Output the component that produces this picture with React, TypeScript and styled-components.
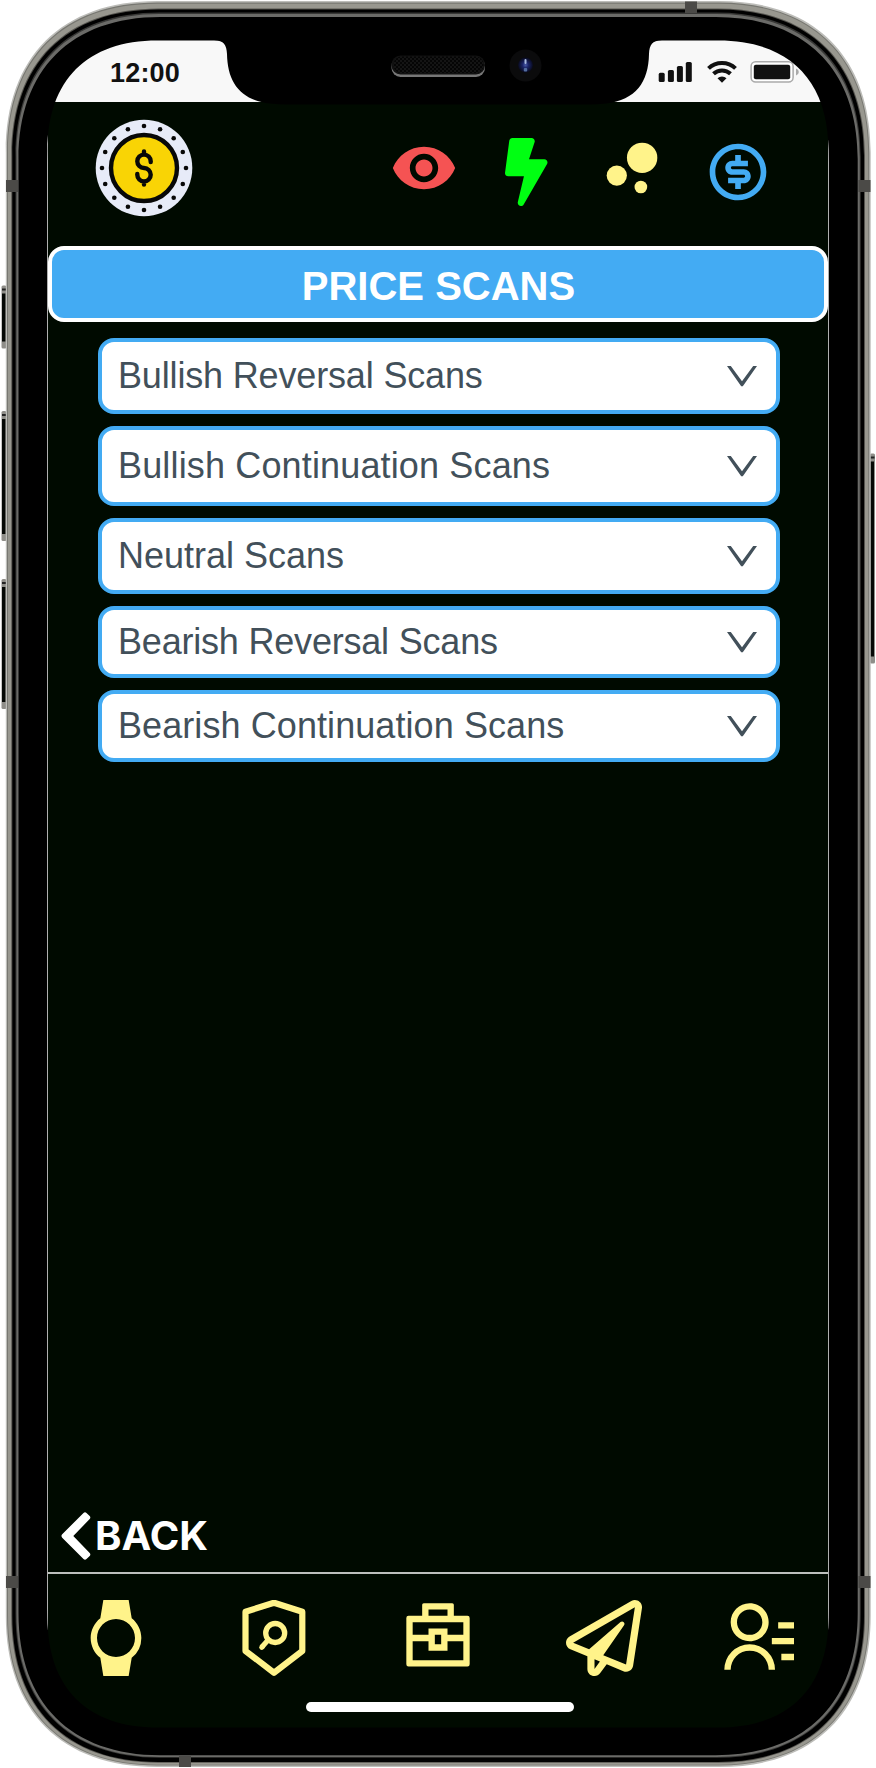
import React from "react";
import styled, { createGlobalStyle } from "styled-components";
import { MdBubbleChart, MdRemoveRedEye, MdWatch } from "react-icons/md";
import { FaBolt, FaRegPaperPlane } from "react-icons/fa";
import { RiMoneyDollarCircleLine } from "react-icons/ri";

const GlobalStyle = createGlobalStyle`
  * { box-sizing: border-box; }
  body { margin: 0; background: #fff; }
`;

const color = {
  screen: "#000a00",
  blue: "#43abf3",
  yellow: "#fff38a",
  text: "#42505a",
};

const Device = styled.div`
  position: relative;
  width: 876px;
  height: 1768px;
  padding: 40px 48px;
  overflow: hidden;
  font-family: "Liberation Sans", Arial, sans-serif;
`;

const FrameLayer = styled.svg`
  position: absolute;
  inset: 0;
  pointer-events: none;
`;

const Screen = styled.div`
  display: flex;
  flex-direction: column;
  height: 1688px;
  background: ${color.screen};
`;

const StatusBar = styled.div`
  display: flex;
  justify-content: space-between;
  height: 62px;
  padding: 0 28px 0 62px;
  background: #f8f8f8;
`;

const Clock = styled.time`
  margin-top: 18px;
  color: #111;
  font-size: 27px;
  font-weight: 700;
  line-height: 30px;
  letter-spacing: 0.2px;
`;

const StatusIcons = styled.svg`
  display: block;
  margin-top: 18px;
`;

const Header = styled.header`
  display: flex;
  align-items: flex-start;
  height: 144px;
  padding: 17px 56px 0 47px;
`;

const HeaderIcon = styled.span<{ $tint: string; $left: number; $top: number }>`
  display: flex;
  flex: none;
  margin: ${(p) => p.$top}px 0 0 ${(p) => p.$left}px;
  color: ${(p) => p.$tint};
  svg { display: block; }
`;

const BoltIcon = styled(FaBolt)`
  width: 42.5px;
  height: 68px;
`;

const Title = styled.h1`
  display: flex;
  align-items: center;
  justify-content: center;
  height: 76px;
  margin: 0;
  padding: 3px 0 0 1px;
  border: 4px solid #fff;
  border-radius: 16px;
  background: ${color.blue};
  color: #fff;
  font-size: 40px;
  font-weight: 700;
  line-height: 46px;
`;

const ScanList = styled.div`
  display: flex;
  flex: 1;
  flex-direction: column;
  gap: 12px;
  padding: 16px 48px 0 50px;
`;

const ScanSelect = styled.button<{ $height: number; $tracking: number }>`
  display: flex;
  align-items: center;
  justify-content: space-between;
  height: ${(p) => p.$height}px;
  padding: 0 19px 0 16px;
  border: 4px solid ${color.blue};
  border-radius: 16px;
  background: #fff;
  color: ${color.text};
  font: 36px/42px "Liberation Sans", Arial, sans-serif;
  letter-spacing: ${(p) => p.$tracking}px;
  text-align: left;
`;

const BackLink = styled.a`
  display: flex;
  align-items: center;
  height: 72px;
  padding-left: 13px;
  gap: 4px;
  color: #fff;
  font: 700 40px/48px Inter, sans-serif;
`;

const NavBar = styled.nav`
  display: grid;
  grid-template-columns: 158px 164px 166px 152px 76px;
  height: 130px;
  padding: 26px 0 0 30px;
  border-top: 2px solid #bdc0bd;
  color: ${color.yellow};
  svg { display: block; }
`;

const HomeIndicator = styled.div`
  width: 268px;
  height: 10px;
  margin: 0 auto 16px 258px;
  border-radius: 5px;
  background: #fff;
`;

const scans = [
  { label: "Bullish Reversal Scans", height: 76, tracking: -0.16 },
  { label: "Bullish Continuation Scans", height: 80, tracking: 0.15 },
  { label: "Neutral Scans", height: 76, tracking: 0 },
  { label: "Bearish Reversal Scans", height: 72, tracking: -0.2 },
  { label: "Bearish Continuation Scans", height: 72, tracking: 0.08 },
];

/* Closed outline with continuous-curvature corners. */
function squircle(x0: number, y0: number, x1: number, y1: number, r: number, k = 0.37) {
  const c = r * k;
  return [
    `M${x0} ${y0 + r}`,
    `C${x0} ${y0 + c} ${x0 + c} ${y0} ${x0 + r} ${y0}H${x1 - r}`,
    `C${x1 - c} ${y0} ${x1} ${y0 + c} ${x1} ${y0 + r}V${y1 - r}`,
    `C${x1} ${y1 - c} ${x1 - c} ${y1} ${x1 - r} ${y1}H${x0 + r}`,
    `C${x0 + c} ${y1} ${x0} ${y1 - c} ${x0} ${y1 - r}Z`,
  ].join("");
}

const SCREEN_EDGE = squircle(47.5, 40.5, 828.5, 1727.5, 110, 0.36);
const RIM_INNER = squircle(26, 25, 850, 1746, 136);

function SideButton({ x, y, height }: { x: number; y: number; height: number }) {
  return (
    <g>
      <rect x={x} y={y} width="5" height={height} rx="1.5" fill="#8f8e89" />
      <rect x={x + 0.5} y={y + 3} width="4" height="2" fill="#222" />
      <rect x={x + 0.5} y={y + 8} width="3.5" height={height - 15} fill="#050805" />
    </g>
  );
}

function Frame() {
  return (
    <FrameLayer width="876" height="1768" viewBox="0 0 876 1768">
      <defs>
        <pattern id="mesh" width="4" height="4" patternUnits="userSpaceOnUse">
          <rect width="4" height="4" fill="#050505" />
          <circle cx="1" cy="1" r="0.8" fill="#262626" />
          <circle cx="3" cy="3" r="0.8" fill="#262626" />
        </pattern>
        <radialGradient id="lens">
          <stop offset="0" stopColor="#4a5aa8" />
          <stop offset="0.4" stopColor="#1b2468" />
          <stop offset="1" stopColor="#080a1c" />
        </radialGradient>
        <linearGradient id="edge" x1="0" y1="140" x2="0" y2="1630" gradientUnits="userSpaceOnUse">
          <stop offset="0" stopColor="#b0b0b0" stopOpacity="0" />
          <stop offset="0.015" stopColor="#b0b0b0" />
          <stop offset="0.985" stopColor="#b0b0b0" />
          <stop offset="1" stopColor="#b0b0b0" stopOpacity="0" />
        </linearGradient>
      </defs>
      <SideButton x={1.5} y={285.5} height={63} />
      <SideButton x={1.5} y={411} height={130} />
      <SideButton x={1.5} y={579} height={130} />
      <SideButton x={870} y={453.5} height={210} />
      <g fillRule="evenodd">
        <path d={squircle(5.8, 1, 870.7, 1767, 151) + RIM_INNER} fill="#bdbdb9" />
        <path d={squircle(7, 2.6, 869.3, 1765.5, 150) + RIM_INNER} fill="#777771" />
        <path d={squircle(8, 3.8, 868.3, 1764.8, 149) + RIM_INNER} fill="#98978f" />
        <path d={squircle(11.3, 8.5, 865, 1762.8, 147) + RIM_INNER} fill="#55544f" />
        <path d={squircle(12.3, 9.5, 864, 1762, 146) + RIM_INNER} />
        <path d={squircle(15.5, 12.5, 860.7, 1757.8, 144) + RIM_INNER} fill="#383836" />
        <path d={squircle(16.5, 14, 859.7, 1757, 143) + RIM_INNER} fill="#6b6b68" />
        <path d={squircle(18.5, 17, 857.7, 1755.3, 142) + SCREEN_EDGE} />
      </g>
      <g fill="#4b4a47">
        <rect x="6" y="180" width="12" height="12" />
        <rect x="858.5" y="180" width="12" height="12" />
        <rect x="6" y="1576" width="12" height="12" />
        <rect x="858.5" y="1576" width="12" height="12" />
        <rect x="685" y="1.5" width="12" height="11.5" />
        <rect x="179" y="1756" width="12" height="11" />
      </g>
      <path d="M214 40H662C652 40.5 649.5 45 649 54C648.5 82 636 100 606 103.5Q598 104.5 588 104.5H288Q278 104.5 270 103.5C240 100 227.5 82 227 54C226.5 45 224 40.5 214 40Z" />
      <rect x="391.5" y="57" width="93.5" height="20" rx="9" fill="#777" />
      <rect x="391.5" y="55.5" width="93.5" height="19" rx="9" fill="#111" />
      <rect x="393.5" y="56.5" width="90" height="16.5" rx="8" fill="url(#mesh)" />
      <circle cx="525.5" cy="65.5" r="16" fill="#0b0b0c" />
      <circle cx="525.5" cy="65" r="7.5" fill="url(#lens)" />
      <rect x="524.5" y="59" width="2" height="5" rx="1" fill="#a9b9df" />
      <rect x="523.8" y="68" width="3.4" height="3.5" rx="1" fill="#536da0" />
      <rect x="47" y="140" width="1" height="1490" fill="url(#edge)" />
      <rect x="828" y="140" width="1" height="1490" fill="url(#edge)" />
    </FrameLayer>
  );
}

function SystemIndicators() {
  return (
    <StatusIcons width="142" height="28" viewBox="0 0 142 28" fill="#111">
      <rect x="0.7" y="14.8" width="6" height="9.2" rx="1.6" />
      <rect x="9.9" y="12" width="6" height="12" rx="1.6" />
      <rect x="18.9" y="8" width="6" height="16" rx="1.6" />
      <rect x="27.8" y="4" width="6" height="20" rx="1.6" />
      <g fill="none" stroke="#111" strokeWidth="4">
        <path d="M50.5 10.4A19.5 19.5 0 0 1 77.5 10.4" />
        <path d="M55.5 15.8A12.5 12.5 0 0 1 72.5 15.8" />
      </g>
      <path d="M59.5 20.3A6.5 6.5 0 0 1 68.5 20.3L64 24.8Z" />
      <rect x="93.1" y="3.8" width="42" height="20.2" rx="4.5" fill="#fff" stroke="#aaa" strokeWidth="1.5" />
      <rect x="95.8" y="6.7" width="36.4" height="14.5" rx="2" />
      <path d="M138 10.5Q140.8 11.5 140.8 13.9Q140.8 16.5 138 17.5Z" fill="#aaa" />
    </StatusIcons>
  );
}

function CoinLogo() {
  const dots = Array.from({ length: 16 }, (_, i) => (i * Math.PI) / 8);
  return (
    <svg width="98" height="98" viewBox="-49 -49 98 98">
      <circle r="48.3" fill="#e7ebf8" />
      {dots.map((a) => (
        <circle key={a} cx={42 * Math.sin(a)} cy={42 * Math.cos(a)} r="2.3" fill="#080808" />
      ))}
      <circle r="33" fill="#f9d405" stroke="#080808" strokeWidth="4.4" />
      <path
        d="M6.7 -6V-6.7A6.7 6.7 0 1 0 0 0A6.7 6.7 0 1 1 -6.7 6.7V6M0 -16.5V-14M0 14V16.5"
        fill="none"
        stroke="#080808"
        strokeWidth="4.4"
        strokeLinecap="round"
      />
    </svg>
  );
}

function ShieldSearch() {
  return (
    <svg width="76" height="76" viewBox="0 0 76 76" fill="none" stroke="currentColor">
      <path d="M38 2.7L66.3 11.7V51L38 72.7L9.5 51V11.7Z" strokeWidth="6.2" strokeLinejoin="round" />
      <circle cx="39.2" cy="33" r="9.5" strokeWidth="5.3" />
      <path d="M32.5 39.5L25.5 47.5" strokeWidth="5" />
      <path d="M26.5 46.5L25.7 47.4" strokeWidth="5" strokeLinecap="round" />
    </svg>
  );
}

function Briefcase() {
  return (
    <svg width="76" height="76" viewBox="0 0 24 24" fill="currentColor" fillRule="evenodd">
      <path d="M7 5V1.500A.5.5 0 0 1 7.500 1h9a.5.5 0 0 1 .5.500V5h4.300a.7.7 0 0 1 .7.700v14.600a.7.7 0 0 1-.7.700H2.700a.7.7 0 0 1-.7-.7V5.700A.7.7 0 0 1 2.700 5ZM9 3V5h6V3ZM4 7V11H9V9h6V11h5V7ZM4 13V19H20V13H15V16H9V13ZM11 11V14h2V11Z" />
    </svg>
  );
}

function Contacts() {
  return (
    <svg width="76" height="76" viewBox="0 0 24 24" fill="currentColor">
      <path d="M19 7h5v2h-5zM17 12h7v2h-7zM20 17h4v2h-4zM2 22a8 8 0 1 1 16 0h-2a6 6 0 1 0-12 0H2zm8-9c-3.315 0-6-2.685-6-6s2.685-6 6-6 6 2.685 6 6-2.685 6-6 6zm0-2c2.21 0 4-1.79 4-4s-1.79-4-4-4-4 1.79-4 4 1.79 4 4 4z" />
    </svg>
  );
}

export default function App() {
  return (
    <>
      <GlobalStyle />
      <Device>
        <Screen>
          <StatusBar>
            <Clock>12:00</Clock>
            <SystemIndicators />
          </StatusBar>
          <Header>
            <CoinLogo />
            <HeaderIcon $tint="#f55353" $left={197} $top={15}>
              <MdRemoveRedEye size={68} />
            </HeaderIcon>
            <HeaderIcon $tint="#00ff12" $left={47} $top={19}>
              <BoltIcon />
            </HeaderIcon>
            <HeaderIcon $tint={color.yellow} $left={46.5} $top={11}>
              <MdBubbleChart size={76} />
            </HeaderIcon>
            <HeaderIcon $tint={color.blue} $left={34} $top={19}>
              <RiMoneyDollarCircleLine size={68} />
            </HeaderIcon>
          </Header>
          <Title>PRICE SCANS</Title>
          <ScanList>
            {scans.map((scan) => (
              <ScanSelect key={scan.label} $height={scan.height} $tracking={scan.tracking}>
                {scan.label}
                <svg width="30" height="21" viewBox="0 0 30 21" fill={color.text}>
                  <path d="M0 0H3.8L15 15.2L26.2 0H30L15.8 20.3H14.2Z" />
                </svg>
              </ScanSelect>
            ))}
          </ScanList>
          <BackLink>
            <svg width="30" height="48" viewBox="0 0 30 48" fill="currentColor">
              <path d="M1.2 22.3L22.5 .9Q24 -.5 25.5 .9L28.7 4.1Q30 5.5 28.7 7L12.3 24L28.7 41Q30 42.5 28.7 43.9L25.5 47.1Q24 48.5 22.5 47.1L1.2 25.7Q-.3 24 1.2 22.3Z" />
            </svg>
            BACK
          </BackLink>
          <NavBar>
            <MdWatch size={76} />
            <ShieldSearch />
            <Briefcase />
            <FaRegPaperPlane size={76} />
            <Contacts />
          </NavBar>
          <HomeIndicator />
        </Screen>
        <Frame />
      </Device>
    </>
  );
}
